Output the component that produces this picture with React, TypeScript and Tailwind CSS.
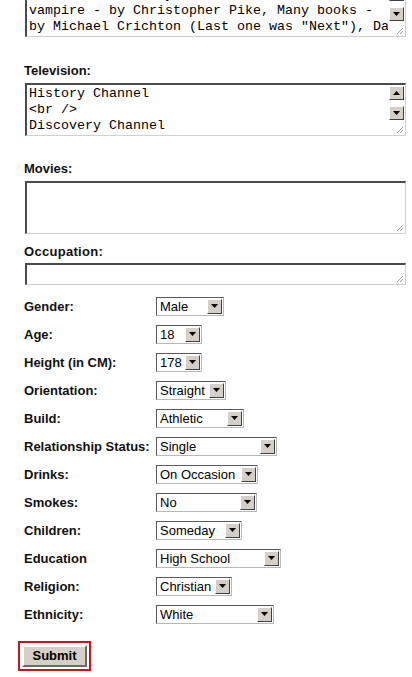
import React from 'react';

const fields = [
    { label: 'Gender:', value: 'Male', w: 'w-[68px]' },
    { label: 'Age:', value: '18', w: 'w-[46px]' },
    { label: 'Height (in CM):', value: '178', w: 'w-[46px]' },
    { label: 'Orientation:', value: 'Straight', w: 'w-[70px]' },
    { label: 'Build:', value: 'Athletic', w: 'w-[88px]' },
    { label: 'Relationship Status:', value: 'Single', w: 'w-[121px]' },
    { label: 'Drinks:', value: 'On Occasion', w: 'w-[102px]' },
    { label: 'Smokes:', value: 'No', w: 'w-[101px]' },
    { label: 'Children:', value: 'Someday', w: 'w-[86px]' },
    { label: 'Education', value: 'High School', w: 'w-[125px]' },
    { label: 'Religion:', value: 'Christian', w: 'w-[76px]' },
    { label: 'Ethnicity:', value: 'White', w: 'w-[118px]' },
];

function Arrow({ up = false }: { up?: boolean }) {
    return (
        <svg width="7" height="4" viewBox="0 0 7 4">
            {up ? <path d="M3.5 0 L7 4 L0 4 Z" fill="#000" /> : <path d="M0 0 L7 0 L3.5 4 Z" fill="#000" />}
        </svg>
    );
}

function ScrollButton({ up = false }: { up?: boolean }) {
    return (
        <div className="w-[15px] h-[14px] bg-[#d4d0c8] border border-t-white border-l-white border-r-[#404040] border-b-[#404040] flex items-center justify-center">
            <Arrow up={up} />
        </div>
    );
}

function Grip() {
    return (
        <svg width="8" height="8" viewBox="0 0 8 8" className="self-end">
            <path d="M7 1 L1 7 M7 4 L4 7" stroke="#a0a0a0" strokeWidth="1" />
        </svg>
    );
}

function TextBox({ lines, height, scroll = true, extra = '' }: { lines: string[]; height: string; scroll?: boolean; extra?: string }) {
    return (
        <div className={`ml-[1px] mr-[6px] ${height} ${extra} flex bg-white border-t-2 border-l-2 border-r border-b border-t-[#4a4a4a] border-l-[#4a4a4a] border-r-[#d0d0d0] border-b-[#d0d0d0]`}>
            <div className="flex-1 overflow-hidden pl-[2px] pt-[1px] font-['Liberation_Mono',monospace] text-[13.33px] leading-[16px] text-black whitespace-pre">
                {lines.map((l, i) => (
                    <div key={i}>{l}</div>
                ))}
            </div>
            <div className="w-[17px] flex flex-col items-center pr-[1px] pb-[1px]">
                {scroll ? (
                    <>
                        <div className="mt-[1px]"><ScrollButton up /></div>
                        <div className="mt-[6px]"><ScrollButton /></div>
                    </>
                ) : null}
                <div className="mt-auto self-end"><Grip /></div>
            </div>
        </div>
    );
}

function Select({ value, w }: { value: string; w: string }) {
    return (
        <div className={`${w} h-[19px] flex items-center bg-white border border-t-[#5a5a5a] border-l-[#5a5a5a] border-r-[#b8b8b8] border-b-[#b8b8b8]`}>
            <span className="pl-[3px] text-[13px] leading-[15px] font-['Liberation_Sans',Arial,sans-serif] text-black whitespace-nowrap">{value}</span>
            <div className="ml-auto mr-[1px] w-[15px] h-[15px] bg-[#d4d0c8] border border-t-white border-l-white border-r-[#404040] border-b-[#404040] flex items-center justify-center">
                <Arrow />
            </div>
        </div>
    );
}

export default function App() {
    const label = "text-[13px] leading-[15px] font-bold font-['Liberation_Sans',Arial,sans-serif] text-[#111]";
    return (
        <div className="w-[412px] h-[677px] overflow-hidden bg-white pl-[24px] font-['Liberation_Sans',Arial,sans-serif]">
            <TextBox
                height="h-[53px]"
                extra="-mt-[16px]"
                lines={[
                    'Jurassic Park - by Michael Crichton, Interview with the',
                    'vampire - by Christopher Pike, Many books -',
                    'by Michael Crichton (Last one was "Next"), Da',
                ]}
            />

            <div className={`${label} mt-[26px]`}>Television:</div>
            <TextBox
                height="h-[53px]"
                extra="mt-[5px]"
                lines={['History Channel', '<br />', 'Discovery Channel']}
            />

            <div className={`${label} mt-[25px]`}>Movies:</div>
            <TextBox height="h-[53px]" extra="mt-[5px]" lines={[]} scroll={false} />

            <div className={`${label} mt-[10px] tracking-[0.3px]`}>Occupation:</div>
            <TextBox height="h-[22px]" extra="mt-[4px]" lines={[]} scroll={false} />

            <div className="mt-[7px] flex flex-col">
                {fields.map((f) => (
                    <div key={f.label} className="h-[28px] flex items-center">
                        <div className={`${label} w-[132px] whitespace-nowrap`}>{f.label}</div>
                        <Select value={f.value} w={f.w} />
                    </div>
                ))}
            </div>

            <div className="mt-[13px] -ml-[6px] w-[73px] h-[30px] border-2 border-[#c8141c] p-[2px]">
                <div className="w-full h-full bg-[#d4d0c8] border-2 border-t-white border-l-white border-r-[#6a6a6a] border-b-[#6a6a6a] flex items-center justify-center text-[13px] font-bold text-black">
                    Submit
                </div>
            </div>
        </div>
    );
}
